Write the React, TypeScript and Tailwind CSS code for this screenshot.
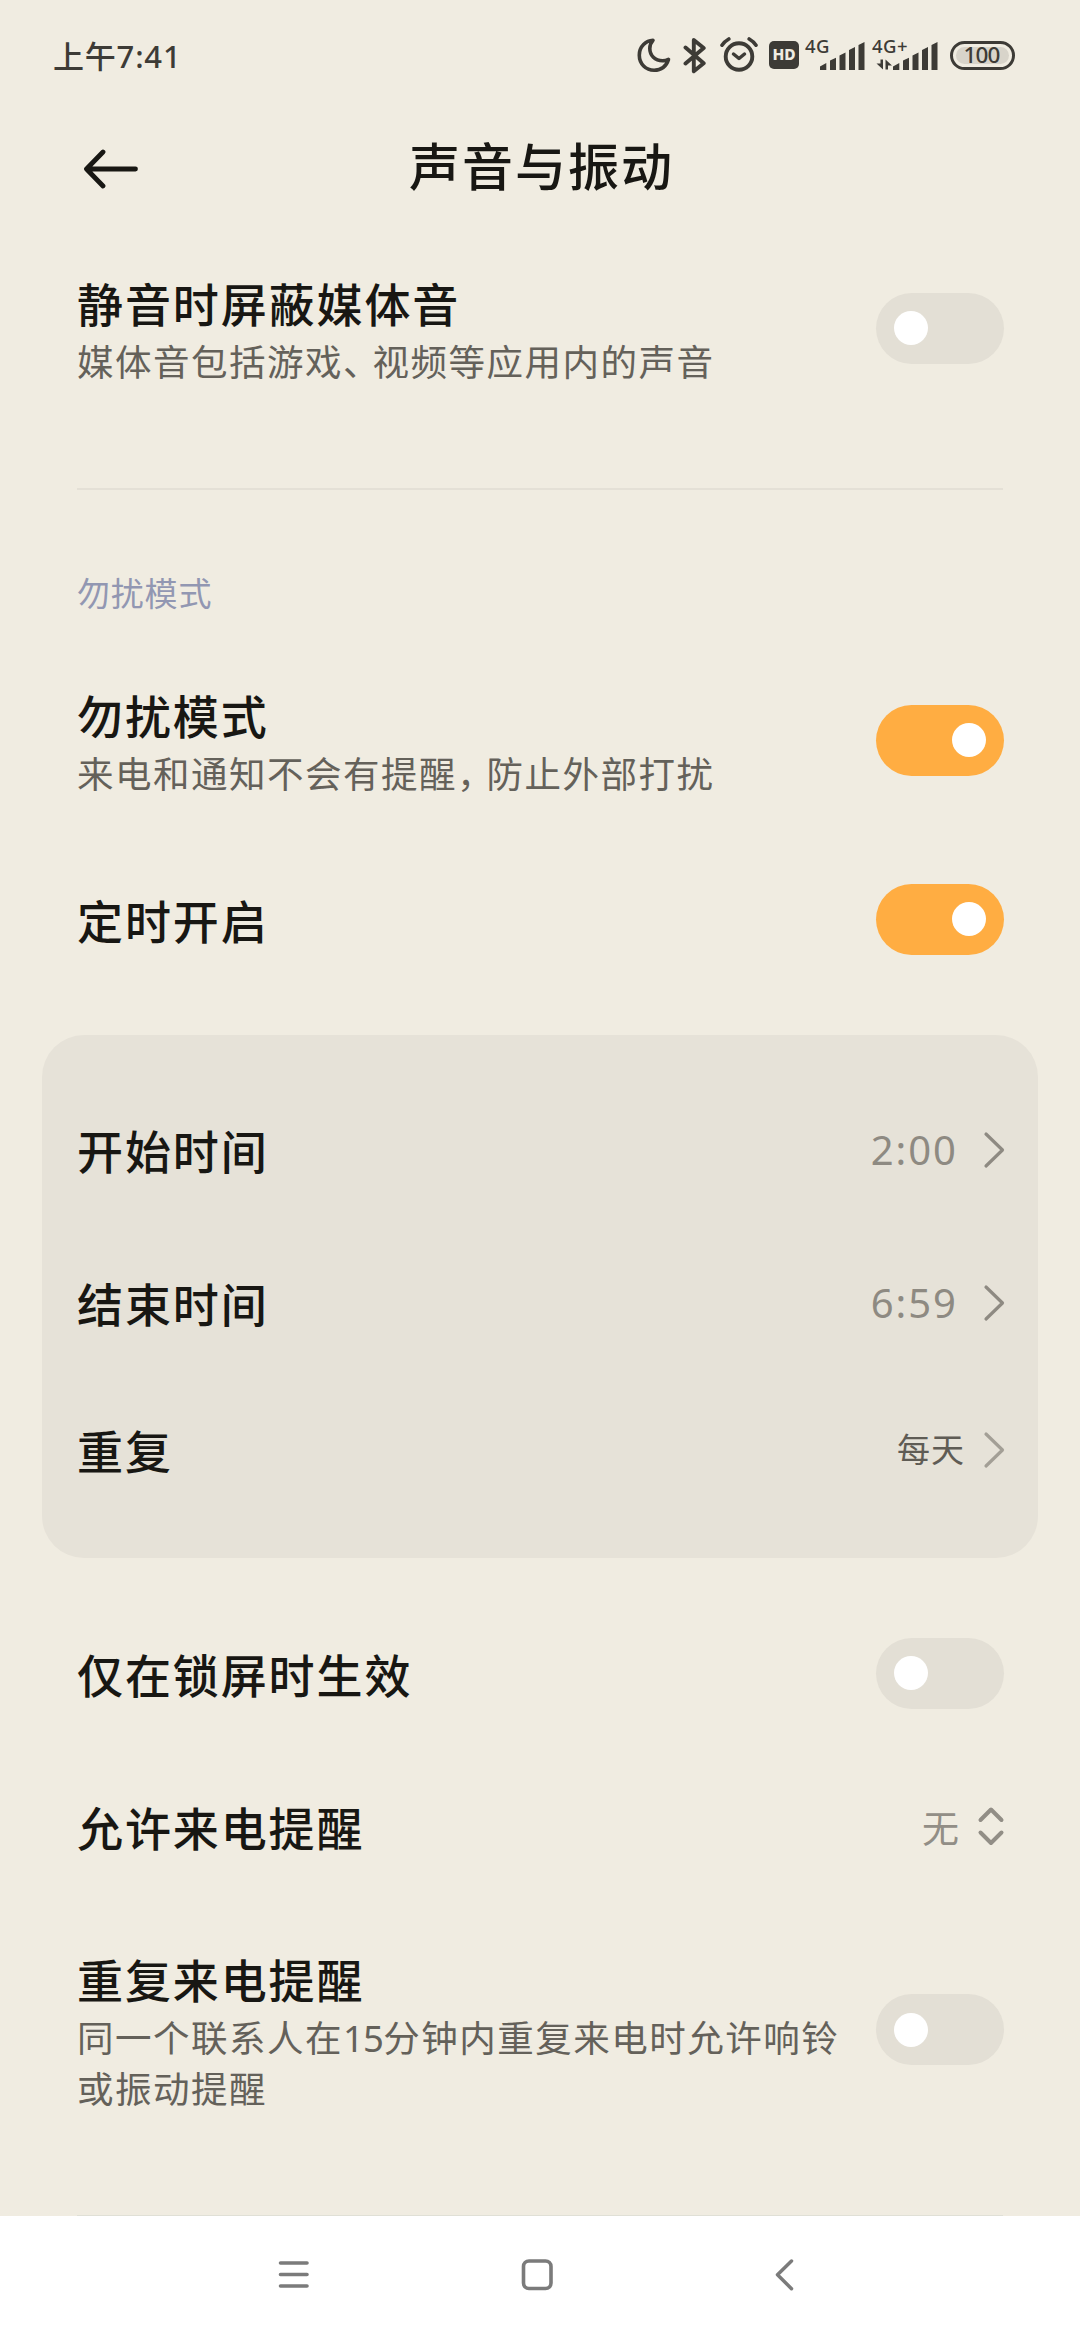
import type { ReactNode } from 'react';

function MoonIcon() {
  return (
    <svg width="34" height="36" viewBox="0 0 34 36" fill="none">
      <path
        d="M16 3.300C9 3.600 2.300 9.500 2.300 18.200c0 8.600 6.600 15 14.800 15 7.300 0 12.400-4.400 14.400-10.800-2 1-4 1.400-6 1.400-7.500 0-12.700-5.400-12.700-12.300 0-3.200 1.200-6 3.200-8.200z"
        stroke="#3d3b36"
        strokeWidth="3.600"
        strokeLinejoin="round"
      />
    </svg>
  );
}

function BluetoothIcon() {
  return (
    <svg width="24" height="37" viewBox="0 0 24 37" fill="none">
      <path
        d="M2.500 10.500l18.200 15.700-9.900 8V3l9.900 8L2.500 26.500"
        stroke="#3d3b36"
        strokeWidth="3.900"
        strokeLinecap="round"
        strokeLinejoin="round"
      />
    </svg>
  );
}

function AlarmIcon() {
  return (
    <svg width="38" height="36" viewBox="0 0 38 36" fill="none" stroke="#3d3b36">
      <circle cx="19" cy="19.500" r="13.300" strokeWidth="3.900" />
      <path d="M13.500 17l5.500 4.500 5.500-4.500" strokeWidth="3.500" strokeLinecap="round" strokeLinejoin="round" />
      <path d="M2 8.200Q4.500 4.500 8.800 2M29.200 2Q33.500 4.500 36 8.200" strokeWidth="3.600" strokeLinecap="round" />
    </svg>
  );
}

function HdIcon() {
  return (
    <span className="flex h-7 w-[30px] items-center justify-center rounded-[5px] bg-[#3d3b36] text-[15.500px] font-extrabold leading-none text-[#f0ece1]">
      HD
    </span>
  );
}

function SignalBars({ label, data }: { label: string; data?: boolean }) {
  return (
    <div className={data ? 'relative h-9 w-[66px]' : 'relative h-9 w-[60px]'}>
      <span className="absolute -top-[4px] left-0 text-[18.500px] font-medium leading-[26px] tracking-[0.500px]">
        {label}
      </span>
      <svg
        className="absolute bottom-0 right-0"
        width={data ? 62 : 46}
        height="36"
        viewBox={data ? '0 0 62 36' : '16 0 46 36'}
        fill="#3d3b36"
      >
        <path d="M17 33v-3.500l6.300-3.500V33zM27 33V23.500l6-2.800V33zM36.500 33V18.500l6-3V33zM46 33V13l6-3V33zM55.500 33V8l6-3V33z" />
        {data && <path d="M4.500 22.500h2.500V32.500L.5 26.500h4zM9.500 22.500l6.500 6h-4v4h-2.500z" />}
      </svg>
    </div>
  );
}

function Battery() {
  return (
    <span className="flex h-[29px] w-[65px] items-center justify-center rounded-full border-[3px] border-[#3d3b36] p-[3px]">
      <span className="flex h-full w-full items-center justify-center rounded-full bg-[#d8d4ca] pr-[2px] text-[22.500px] font-medium leading-none tracking-[-0.800px] text-[#3d3b36]">
        100
      </span>
    </span>
  );
}

function StatusBar() {
  return (
    <div className="flex h-[110px] items-center justify-between pl-[53px] pr-[65px] text-[#3d3b36]">
      <span className="mt-[3px] text-[31px] font-medium leading-none tracking-[0.800px]">上午7:41</span>
      <div className="flex items-center">
        <MoonIcon />
        <span className="ml-[12px]">
          <BluetoothIcon />
        </span>
        <span className="ml-[13px]">
          <AlarmIcon />
        </span>
        <span className="ml-[11px]">
          <HdIcon />
        </span>
        <span className="ml-[6px]">
          <SignalBars label="4G" />
        </span>
        <span className="ml-[7px]">
          <SignalBars label="4G+" data />
        </span>
        <span className="ml-[12px]">
          <Battery />
        </span>
      </div>
    </div>
  );
}

function Header() {
  return (
    <header className="grid h-[112px] grid-cols-[1fr_auto_1fr] items-center pl-[83px] pr-[80px]">
      <svg className="mt-[6px]" width="56" height="40" viewBox="0 0 56 40" fill="none">
        <path
          d="M20 3L3.500 20 20 37M4 20h48.500"
          stroke="#181713"
          strokeWidth="4.800"
          strokeLinecap="round"
          strokeLinejoin="round"
        />
      </svg>
      <h1 className="text-[51px] font-medium leading-[60px] tracking-[2px] text-[#181713]">声音与振动</h1>
      <span />
    </header>
  );
}

function Toggle({ on = false }: { on?: boolean }) {
  return (
    <button
      role="switch"
      aria-checked={on}
      className={
        on
          ? 'mb-[4px] flex h-[71px] w-32 shrink-0 items-center justify-end rounded-full bg-[#ffad42] px-[18px]'
          : 'mb-[4px] flex h-[71px] w-32 shrink-0 items-center rounded-full bg-[#e3dfd5] px-[18px]'
      }
    >
      <span className="size-[34px] rounded-full bg-white" />
    </button>
  );
}

function Row({
  title,
  copy,
  className,
  children,
}: {
  title: string;
  copy?: ReactNode;
  className: string;
  children: ReactNode;
}) {
  return (
    <div className={`flex items-center justify-between ${className}`}>
      <div>
        <p className="text-[46px] font-medium leading-[65px] tracking-[1.900px] text-[#181713]">{title}</p>
        {copy ? (
          <p className="whitespace-nowrap text-[36.500px] leading-[51px] tracking-[1.500px] text-[#64615a]">{copy}</p>
        ) : null}
      </div>
      {children}
    </div>
  );
}

function ChevronRight({ color }: { color: string }) {
  return (
    <svg width="22" height="38" viewBox="0 0 22 38" fill="none">
      <path d="M3 3l16.500 16L3 35" stroke={color} strokeWidth="3.200" strokeLinecap="round" strokeLinejoin="round" />
    </svg>
  );
}

function TimeValue({ value }: { value: string }) {
  return (
    <div className="mb-[3px] flex items-center gap-[25px]">
      <span className="text-[40px] leading-none tracking-[2px] text-[#8e8a82]">{value}</span>
      <ChevronRight color="#8e8a82" />
    </div>
  );
}

function NavBar() {
  return (
    <nav className="flex h-[124px] items-start bg-white pl-[278px] pt-[41px]">
      <svg width="32" height="36" viewBox="0 0 32 36" fill="none">
        <path d="M2.500 6H29M2.500 17.500H29M2.500 29H29" stroke="#7b7b7b" strokeWidth="3.600" strokeLinecap="round" />
      </svg>
      <svg className="ml-[210px]" width="34" height="36" viewBox="0 0 34 36" fill="none">
        <rect x="3.500" y="4" width="27.500" height="27.500" rx="5.500" stroke="#7b7b7b" strokeWidth="3.600" />
      </svg>
      <svg className="ml-[219px]" width="24" height="36" viewBox="0 0 24 36" fill="none">
        <path
          d="M18.500 4L4.500 17.700l14 14"
          stroke="#7b7b7b"
          strokeWidth="3.500"
          strokeLinecap="round"
          strokeLinejoin="round"
        />
      </svg>
    </nav>
  );
}

export default function App() {
  return (
    <div className="flex h-[2340px] w-[1080px] flex-col overflow-hidden bg-[#f0ece1] font-['Noto_Sans','Noto_Sans_CJK_SC',sans-serif]">
      <StatusBar />
      <Header />

      <main className="flex flex-1 flex-col pt-[50px]">
        <Row
          className="h-[116px] pl-[77px] pr-[76px]"
          title="静音时屏蔽媒体音"
          copy={
            <>
              媒体音包括游戏<span className="tracking-[-7px]">、</span>视频等应用内的声音
            </>
          }
        >
          <Toggle />
        </Row>

        <div className="mx-[77px] mt-[100px] h-[2px] bg-[#e4e0d6]" />

        <h2 className="mt-[82px] pl-[77px] text-[33px] leading-[44px] tracking-[0.8px] text-[#9297b2]">勿扰模式</h2>

        <Row
          className="mt-[68px] h-[116px] pl-[77px] pr-[76px]"
          title="勿扰模式"
          copy={
            <>
              来电和通知不会有提醒<span className="tracking-[-7px]">，</span>防止外部打扰
            </>
          }
        >
          <Toggle on />
        </Row>
        <Row className="mt-[83px] h-[76px] pl-[77px] pr-[76px]" title="定时开启">
          <Toggle on />
        </Row>

        <section className="mx-[42px] mt-[76px] h-[523px] rounded-[42px] bg-[#e6e2d8] pl-[35px] pr-[33px] pt-10">
          <Row className="h-[152px]" title="开始时间">
            <TimeValue value="2:00" />
          </Row>
          <Row className="h-[154px]" title="结束时间">
            <TimeValue value="6:59" />
          </Row>
          <Row className="h-[140px]" title="重复">
            <div className="mb-[3px] flex items-center gap-[18px]">
              <span className="text-[33px] leading-none tracking-[1px] text-[#5f5c55]">每天</span>
              <ChevronRight color="#a39f96" />
            </div>
          </Row>
        </section>

        <Row className="mt-[79px] h-[76px] pl-[77px] pr-[76px]" title="仅在锁屏时生效">
          <Toggle />
        </Row>
        <Row className="mt-[77px] h-[76px] pl-[77px] pr-[75px]" title="允许来电提醒">
          <div className="flex items-center gap-[18px]">
            <span className="text-[37px] leading-none text-[#928e86]">无</span>
            <svg className="mb-[4px]" width="28" height="42" viewBox="0 0 28 42" fill="none">
              <path
                d="M3.500 15L14 4.500 24.500 15M3.500 27.500L14 38l10.500-10.500"
                stroke="#928e86"
                strokeWidth="4"
                strokeLinecap="round"
                strokeLinejoin="round"
              />
            </svg>
          </div>
        </Row>
        <Row
          className="mt-[82px] h-[167px] pl-[77px] pr-[76px]"
          title="重复来电提醒"
          copy={
            <>
              同一个联系人在<span className="tracking-[-0.8px]">15</span>分钟内重复来电时允许响铃
              <br />
              或振动提醒
            </>
          }
        >
          <Toggle />
        </Row>

        <div className="mx-[77px] mt-[100px] h-px bg-[#e0e0d6]" />
      </main>

      <NavBar />
    </div>
  );
}
